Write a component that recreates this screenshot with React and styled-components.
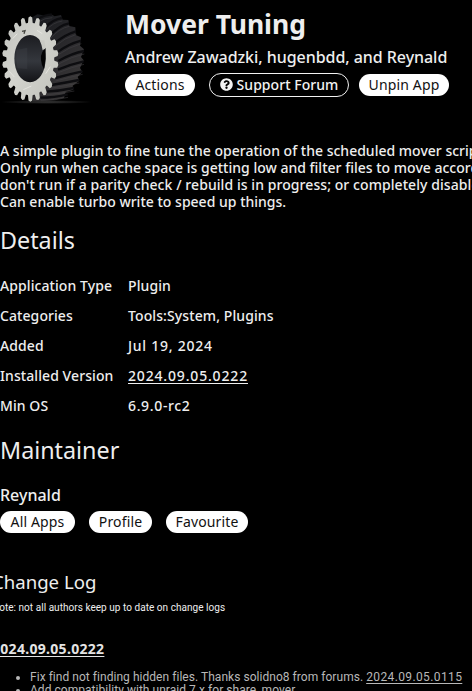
import React from 'react';
import styled, { createGlobalStyle } from 'styled-components';
import { FaQuestionCircle } from 'react-icons/fa';

const TEETH = 22;

// points of the front face, walking round the rim tooth by tooth
const facePoints = () => {
  const steps = [
    [-0.5, 0.85],
    [-0.34, 0.86],
    [-0.24, 0.98],
    [0, 1.01],
    [0.24, 0.98],
    [0.34, 0.86],
  ];
  const points = [];
  for (let i = 0; i < TEETH; i++) {
    steps.forEach(([offset, r]) => {
      const a = ((i + offset) / TEETH) * Math.PI * 2;
      const x = 91 + Math.sin(a) * 84 * r;
      const y = 177 - Math.cos(a) * 127 * r;
      points.push(`${x.toFixed(1)},${y.toFixed(1)}`);
    });
  }
  return points.join(' ');
};

const grooves = [
  'M112 58 Q134 44 156 44',
  'M137 82 Q158 58 186 54',
  'M150 107 Q176 76 207 70',
  'M163 131 Q193 104 228 94',
  'M171 157 Q206 132 243 122',
  'M175 183 Q215 160 252 153',
  'M174 209 Q214 192 251 184',
  'M166 234 Q210 222 247 214',
  'M154 255 Q197 248 237 240',
  'M139 275 Q182 272 222 264',
  'M121 293 Q164 293 203 283',
];

function Gear() {
  return (
    <GearIcon viewBox='0 0 360 345'>
      <defs>
        <linearGradient id='body' x1='0' y1='0' x2='0.7' y2='1'>
          <stop offset='0' stopColor='#15171b' />
          <stop offset='0.6' stopColor='#2c2b2e' />
          <stop offset='1' stopColor='#3b3939' />
        </linearGradient>
        <linearGradient id='face' x1='0' y1='0' x2='1' y2='1'>
          <stop offset='0' stopColor='#bfc0bc' />
          <stop offset='0.45' stopColor='#d3d4ce' />
          <stop offset='1' stopColor='#c1c2bb' />
        </linearGradient>
        <linearGradient id='bore' x1='0' y1='0' x2='0' y2='1'>
          <stop offset='0' stopColor='#1b1c20' />
          <stop offset='0.55' stopColor='#34373d' />
          <stop offset='1' stopColor='#121316' />
        </linearGradient>
        <radialGradient id='floor'>
          <stop offset='0' stopColor='#3a3a3a' />
          <stop offset='1' stopColor='#000' />
        </radialGradient>
      </defs>
      <ellipse cx='140' cy='306' rx='140' ry='6' fill='url(#floor)' />
      <path
        d='M92 55 L112 43 L137 47 L151 41 L164 49 L183 45 L188 59 L205 60 L208 78 L226 82 L227 105 L243 112 L240 137 L252 148 L243 171 L251 181 L240 204 L247 215 L233 231 L238 242 L218 257 L220 269 L197 276 L192 294 L160 300 L98 304 Z'
        fill='url(#body)'
      />
      {grooves.map((d) => (
        <g key={d} fill='none'>
          <path d={d} stroke='#0d0d10' strokeWidth='7' />
          <path d={d} stroke='#454448' strokeWidth='3' opacity='0.5' transform='translate(1 9)' />
        </g>
      ))}
      <polygon points={facePoints()} fill='url(#face)' />
      <path d='M38 116 L52 101 M28 214 L43 231 M70 269 L94 258 M127 101 L111 91 M151 200 L137 221' stroke='#e4e4de' strokeWidth='3' />
      <ellipse cx='90' cy='176' rx='47' ry='71' fill='url(#bore)' />
      <path d='M49 150 Q46 176 52 205 L82 207 L82 143 Z' fill='#454850' opacity='0.3' />
      <path d='M137 143 L132 149 Q117 163 126 195 L132 208 Q139 177 137 143 Z' fill='#030304' />
      <path d='M119 121 L133 121 L137 144 L128 151 Q126 136 119 121 Z' fill='#c9cac4' />
      <path d='M66 94 L75 92 L72 101' fill='none' stroke='#44453f' strokeWidth='4' />
    </GearIcon>
  );
}

const details = [
  { label: 'Application Type', value: 'Plugin' },
  { label: 'Categories', value: 'Tools:System, Plugins' },
  { label: 'Added', value: 'Jul 19, 2024', spacing: '0.75px' },
  { label: 'Installed Version', value: '2024.09.05.0222', spacing: '0.83px', link: true },
  { label: 'Min OS', value: '6.9.0-rc2', spacing: '0.65px' },
];

function App() {
  return (
    <Panel>
      <GlobalStyle />
      <Header>
        <Gear />
        <div>
          <Title>Mover Tuning</Title>
          <Author>Andrew Zawadzki, hugenbdd, and Reynald</Author>
          <Actions>
            <Button $width='70px'>Actions</Button>
            <SupportButton $width='140px'>
              <FaQuestionCircle size={13} />
              Support Forum
            </SupportButton>
            <Button $width='90px'>Unpin App</Button>
          </Actions>
        </div>
      </Header>

      <Description>
        <Line>A simple plugin to fine tune the operation of the scheduled mover script.</Line>
        <Line>Only run when cache space is getting low and filter files to move accordingly,</Line>
        <Line $spacing='0.07px'>don't run if a parity check / rebuild is in progress; or completely disable.</Line>
        <Line>Can enable turbo write to speed up things.</Line>
      </Description>

      <Heading>Details</Heading>
      <Table>
        {details.map(({ label, value, spacing, link }) => (
          <React.Fragment key={label}>
            <dt>{label}</dt>
            <Value $spacing={spacing}>{link ? <Link>{value}</Link> : value}</Value>
          </React.Fragment>
        ))}
      </Table>

      <Heading>Maintainer</Heading>
      <Maintainer>Reynald</Maintainer>
      <MaintainerActions>
        <Button $width='75px'>All Apps</Button>
        <Button $width='63px'>Profile</Button>
        <Button $width='82px'>Favourite</Button>
      </MaintainerActions>

      <ChangeLog>
        <LogTitle>Change Log</LogTitle>
        <Note>Note: not all authors keep up to date on change logs</Note>
        <Version>2024.09.05.0222</Version>
        <LogList>
          <li>
            Fix find not finding hidden files. Thanks solidno8 from forums. <LogLink>2024.09.05.0115</LogLink>
          </li>
          <li>Add compatibility with unraid 7.x for share_mover</li>
        </LogList>
      </ChangeLog>
    </Panel>
  );
}

const GlobalStyle = createGlobalStyle`
  * {
    box-sizing: border-box;
    margin: 0;
    padding: 0;
  }
  body {
    background: #000;
    overflow: hidden;
  }
`;

const Panel = styled.div`
  width: 472px;
  height: 691px;
  overflow: hidden;
  background: #000;
  color: #eee;
  font-family: 'Noto Sans', sans-serif;
  font-size: 14px;
  font-weight: 500;
  white-space: nowrap;
`;

const Header = styled.div`
  display: grid;
  grid-template-columns: 125px 1fr;
  height: 142px;
`;

const GearIcon = styled.svg`
  width: 120px;
  height: 115px;
`;

const Title = styled.h1`
  margin-top: 6px;
  font-size: 26.5px;
  font-weight: 700;
  line-height: 36px;
`;

const Author = styled.p`
  margin-top: 3px;
  font-size: 16px;
  line-height: 24px;
  letter-spacing: -0.05px;
`;

const Actions = styled.div`
  display: flex;
  align-items: center;
  gap: 14px;
  margin-top: 4px;
`;

const Button = styled.button`
  display: flex;
  align-items: center;
  justify-content: center;
  width: ${({ $width }) => $width};
  height: 22px;
  padding-bottom: 1px;
  border: none;
  border-radius: 12px;
  background: #fff;
  color: #111;
  font: inherit;
  font-weight: 400;
  line-height: 18px;
  letter-spacing: 0.15px;
`;

const SupportButton = styled(Button)`
  gap: 4px;
  height: 24px;
  margin-right: -4px;
  border: 1px solid #f2f2f2;
  background: transparent;
  color: #f2f2f2;
  font-weight: 500;
  letter-spacing: 0.05px;
`;

const Description = styled.div`
  line-height: 17px;
`;

const Line = styled.p`
  letter-spacing: ${({ $spacing }) => $spacing || '0.01px'};
`;

const Heading = styled.h2`
  margin-top: 15px;
  font-size: 23.3px;
  font-weight: 400;
  line-height: 30px;
`;

const Table = styled.dl`
  display: grid;
  grid-template-columns: 128px 1fr;
  grid-auto-rows: 30px;
  margin: 16px 0 -1px;
  line-height: 30px;
  letter-spacing: 0.08px;
`;

const Value = styled.dd`
  letter-spacing: ${({ $spacing }) => $spacing || '0.1px'};
`;

const Link = styled.a`
  text-decoration: underline;
  text-decoration-thickness: 1px;
  text-underline-offset: 2px;
  cursor: pointer;
`;

const Maintainer = styled.p`
  margin-top: 18px;
  font-size: 16px;
  line-height: 24px;
`;

const MaintainerActions = styled.div`
  display: flex;
  gap: 14px;
  margin-top: 4px;
`;

const ChangeLog = styled.div`
  margin: 36px 0 0 -8px;
`;

const LogTitle = styled.h3`
  font-size: 18.6px;
  font-weight: 400;
  line-height: 26px;
`;

const Note = styled.p`
  margin-top: 6px;
  font-family: Roboto, sans-serif;
  font-size: 10px;
  font-weight: 400;
  line-height: 14px;
  letter-spacing: 0.04px;
`;

const Version = styled(Link)`
  display: block;
  margin-top: 24px;
  font-weight: 700;
  line-height: 20px;
  letter-spacing: 0.3px;
  color: #e4e4e4;
`;

const LogList = styled.ul`
  margin-top: 12px;
  padding-left: 38px;
  color: #b8b8b8;
  font-family: Roboto, sans-serif;
  font-size: 12px;
  font-weight: 400;
  line-height: 13px;
  letter-spacing: 0.04px;
`;

const LogLink = styled(Link)`
  letter-spacing: 0.38px;
`;

export default App;
